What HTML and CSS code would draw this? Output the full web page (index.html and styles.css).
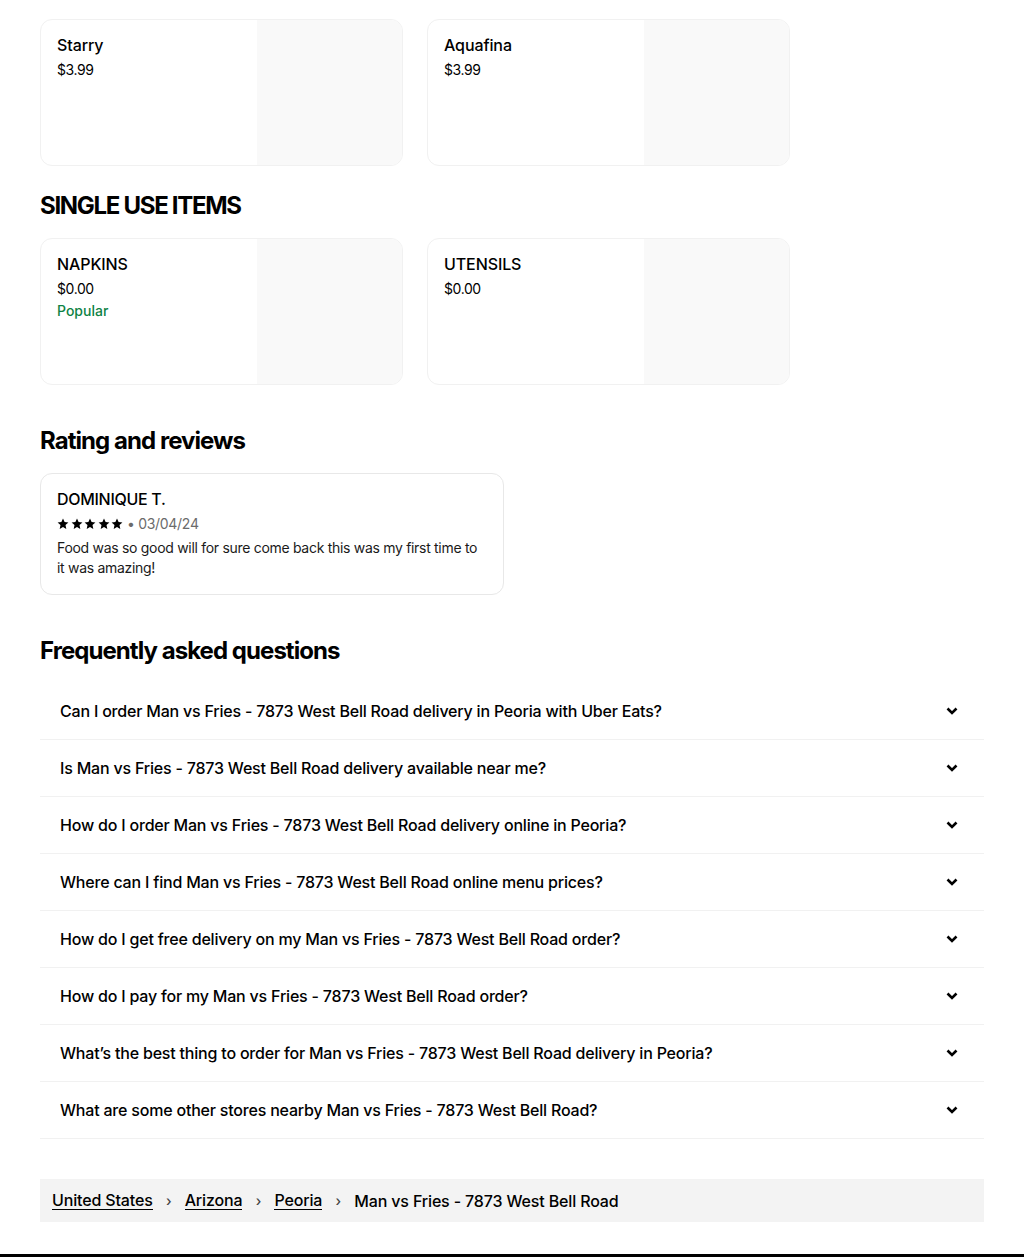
FILE: index.html
```html
<!DOCTYPE html>
<html lang="en">
<head>
<meta charset="utf-8">
<title>Man vs Fries - 7873 West Bell Road</title>
<link rel="stylesheet" href="styles.css">
</head>
<body>
<main class="page">
  <section class="grid">
    <div class="card">
      <div class="card-info">
        <div class="card-title">Starry</div>
        <div class="card-price">$3.99</div>
      </div>
      <div class="card-img"></div>
    </div>
    <div class="card">
      <div class="card-info">
        <div class="card-title">Aquafina</div>
        <div class="card-price">$3.99</div>
      </div>
      <div class="card-img"></div>
    </div>
  </section>

  <h2 class="section-title first">SINGLE USE ITEMS</h2>
  <section class="grid">
    <div class="card">
      <div class="card-info">
        <div class="card-title">NAPKINS</div>
        <div class="card-price">$0.00</div>
        <div class="card-tag">Popular</div>
      </div>
      <div class="card-img"></div>
    </div>
    <div class="card">
      <div class="card-info">
        <div class="card-title">UTENSILS</div>
        <div class="card-price">$0.00</div>
      </div>
      <div class="card-img"></div>
    </div>
  </section>

  <h2 class="section-title">Rating and reviews</h2>
  <div class="review">
    <div class="review-name">DOMINIQUE T.</div>
    <div class="review-meta">
      <span class="stars">
        <svg viewBox="0 0 12 12"><path d="M6 .6l1.6 3.5 3.8.4-2.9 2.6.8 3.8L6 9l-3.3 1.9.8-3.8L.6 4.5l3.8-.4z"/></svg>
        <svg viewBox="0 0 12 12"><path d="M6 .6l1.6 3.5 3.8.4-2.9 2.6.8 3.8L6 9l-3.3 1.9.8-3.8L.6 4.5l3.8-.4z"/></svg>
        <svg viewBox="0 0 12 12"><path d="M6 .6l1.6 3.5 3.8.4-2.9 2.6.8 3.8L6 9l-3.3 1.9.8-3.8L.6 4.5l3.8-.4z"/></svg>
        <svg viewBox="0 0 12 12"><path d="M6 .6l1.6 3.5 3.8.4-2.9 2.6.8 3.8L6 9l-3.3 1.9.8-3.8L.6 4.5l3.8-.4z"/></svg>
        <svg viewBox="0 0 12 12"><path d="M6 .6l1.6 3.5 3.8.4-2.9 2.6.8 3.8L6 9l-3.3 1.9.8-3.8L.6 4.5l3.8-.4z"/></svg>
      </span>
      <span class="review-date">• 03/04/24</span>
    </div>
    <p class="review-text">Food was so good will for sure come back this was my first time to it was amazing!</p>
  </div>

  <h2 class="section-title">Frequently asked questions</h2>
  <ul class="faq">
    <li class="faq-row"><span>Can I order Man vs Fries - 7873 West Bell Road delivery in Peoria with Uber Eats?</span><svg class="chev" viewBox="0 0 12 8"><path d="M1.5 1.5L6 6l4.5-4.5"/></svg></li>
    <li class="faq-row"><span>Is Man vs Fries - 7873 West Bell Road delivery available near me?</span><svg class="chev" viewBox="0 0 12 8"><path d="M1.5 1.5L6 6l4.5-4.5"/></svg></li>
    <li class="faq-row"><span>How do I order Man vs Fries - 7873 West Bell Road delivery online in Peoria?</span><svg class="chev" viewBox="0 0 12 8"><path d="M1.5 1.5L6 6l4.5-4.5"/></svg></li>
    <li class="faq-row"><span>Where can I find Man vs Fries - 7873 West Bell Road online menu prices?</span><svg class="chev" viewBox="0 0 12 8"><path d="M1.5 1.5L6 6l4.5-4.5"/></svg></li>
    <li class="faq-row"><span>How do I get free delivery on my Man vs Fries - 7873 West Bell Road order?</span><svg class="chev" viewBox="0 0 12 8"><path d="M1.5 1.5L6 6l4.5-4.5"/></svg></li>
    <li class="faq-row"><span>How do I pay for my Man vs Fries - 7873 West Bell Road order?</span><svg class="chev" viewBox="0 0 12 8"><path d="M1.5 1.5L6 6l4.5-4.5"/></svg></li>
    <li class="faq-row"><span>What’s the best thing to order for Man vs Fries - 7873 West Bell Road delivery in Peoria?</span><svg class="chev" viewBox="0 0 12 8"><path d="M1.5 1.5L6 6l4.5-4.5"/></svg></li>
    <li class="faq-row"><span>What are some other stores nearby Man vs Fries - 7873 West Bell Road?</span><svg class="chev" viewBox="0 0 12 8"><path d="M1.5 1.5L6 6l4.5-4.5"/></svg></li>
  </ul>

  <nav class="crumbs">
    <a href="#">United States</a><span class="sep">›</span>
    <a href="#">Arizona</a><span class="sep">›</span>
    <a href="#">Peoria</a><span class="sep">›</span>
    <span class="current">Man vs Fries - 7873 West Bell Road</span>
  </nav>
</main>
<footer class="footer"></footer>
</body>
</html>
```

FILE: styles.css
```css
* { box-sizing: border-box; }
html, body { margin: 0; padding: 0; background: #fff; }
body {
  font-family: "Inter", "Liberation Sans", sans-serif;
  color: #000;
}
.page {
  padding: 19px 40px 32px 40px;
}
.grid {
  display: grid;
  grid-template-columns: 363px 363px;
  column-gap: 24px;
}
.card {
  height: 147px;
  border: 1px solid #f1f1f1;
  border-radius: 12px;
  display: flex;
  overflow: hidden;
}
.card-info {
  flex: 1;
  padding: 15px 16px;
}
.card-img {
  width: 145px;
  background: #f9f9f9;
}
.card-title {
  font-size: 16px;
  line-height: 20px;
  font-weight: 500;
  letter-spacing: -0.1px;
  margin-bottom: 5px;
}
.card-price {
  font-size: 14px;
  line-height: 20px;
  color: #000;
  letter-spacing: -0.4px;
}
.card-tag {
  font-size: 14px;
  line-height: 20px;
  margin-top: 2px;
  color: #0e8345;
  font-weight: 500;
}
.section-title {
  margin: 40px 0 16px;
  font-size: 24px;
  line-height: 32px;
  font-weight: 700;
  letter-spacing: -0.95px;
}
.section-title.first { margin-top: 24px; letter-spacing: -1.3px; }
.review {
  width: 464px;
  border: 1px solid #e8e8e8;
  border-radius: 12px;
  padding: 15px 16px 16px;
}
.review-name {
  font-size: 16px;
  line-height: 20px;
  font-weight: 500;
  letter-spacing: -0.3px;
}
.review-meta {
  margin-top: 5px;
  display: flex;
  align-items: center;
  font-size: 14px;
  line-height: 20px;
}
.stars { display: flex; gap: 1.5px; }
.stars svg { width: 12px; height: 12px; fill: #000; }
.review-date { color: #6b6b6b; margin-left: 4px; letter-spacing: -0.3px; }
.review-text {
  margin: 4px 0 0;
  max-width: 424px;
  font-size: 14px;
  line-height: 20px;
  color: #1a1a1a;
  letter-spacing: -0.3px;
}
.faq {
  list-style: none;
  margin: 0;
  padding: 0;
}
.faq-row {
  height: 57px;
  padding: 0 20px;
  display: flex;
  align-items: center;
  justify-content: space-between;
  border-bottom: 1px solid #f1f1f1;
  font-size: 16px;
  line-height: 20px;
  font-weight: 500;
  letter-spacing: -0.2px;
}
.chev {
  width: 12px;
  height: 8px;
  margin-right: 6px;
  fill: none;
  stroke: #000;
  stroke-width: 2.6;
}
.crumbs {
  margin-top: 40px;
  height: 43px;
  background: #f3f3f3;
  padding: 0 12px;
  display: flex;
  align-items: center;
  font-size: 16px;
  line-height: 20px;
  font-weight: 500;
  letter-spacing: -0.15px;
}
.crumbs a {
  color: #000;
  text-decoration: none;
  border-bottom: 1px solid #000;
  line-height: 18px;
}
.crumbs .sep {
  margin: 0 10px;
  width: 12px;
  text-align: center;
  color: #444;
  font-size: 14px;
}
.footer {
  height: 3px;
  background: #000;
}
```
